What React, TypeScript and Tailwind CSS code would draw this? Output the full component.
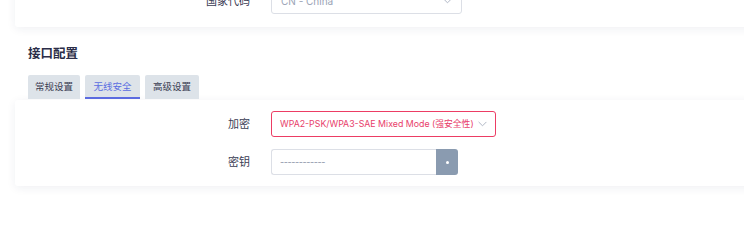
import React from "react";

const font = { fontFamily: 'Inter, "Noto Sans CJK SC", sans-serif' };

function Chevron({ className }: { className?: string }) {
  return (
    <svg viewBox="0 0 10 6" className={className} fill="none" stroke="currentColor" strokeWidth="1" strokeLinecap="round" strokeLinejoin="round">
      <path d="M1 1l4 4 4-4" />
    </svg>
  );
}

export default function App() {
  return (
    <div className="w-[744px] h-[227px] overflow-hidden bg-white" style={font}>
      <div className="pl-[15px]">
        {/* top card */}
        <div className="-mt-[16px] w-[760px] bg-white rounded-[3px] shadow-[0_2px_10px_rgba(30,40,90,0.07)] pt-[4px] pb-[13px] flex items-center">
          <div className="w-[235px] text-right text-[11px] text-[#3b3d55]">国家代码</div>
          <div className="ml-[21px] w-[191px] h-[26px] border border-[#dcdfe6] rounded-[3px] flex items-center justify-between px-[9px]">
            <span className="text-[10px] text-[#9aa3b5]">CN - China</span>
            <Chevron className="w-[9px] h-[6px] text-[#a8b0c0]" />
          </div>
        </div>

        <div className="pl-[13px] pt-[17px] text-[12.5px] font-bold text-[#2b2d48] leading-[20px]">接口配置</div>

        <div className="pl-[13px] mt-[11px] flex gap-[5px] h-[24px]">
          <div className="w-[52px] h-[24px] bg-[#dde3e9] rounded-t-[2px] flex items-center justify-center text-[9.5px] text-[#3a3c52]">常规设置</div>
          <div className="w-[55px] h-[24px] bg-[#dde3e9] rounded-t-[2px] flex items-center justify-center text-[9.5px] text-[#5b6ee1] border-b-[2px] border-[#5b6be0] pt-[2px]">无线安全</div>
          <div className="w-[54px] h-[24px] bg-[#dde3e9] rounded-t-[2px] flex items-center justify-center text-[9.5px] text-[#3a3c52]">高级设置</div>
        </div>

        {/* card 2 */}
        <div className="mt-[1px] w-[760px] bg-white rounded-[3px] shadow-[0_2px_10px_rgba(30,40,90,0.07)] pt-[11px] pb-[11px] flex flex-col gap-[12px]">
          <div className="flex items-center">
            <div className="w-[235px] text-right text-[11px] text-[#3b3d55]">加密</div>
            <div className="ml-[21px] w-[225px] h-[26px] border border-[#ec3d64] rounded-[3px] flex items-center justify-between pl-[8px] pr-[8px]">
              <span className="text-[8.8px] text-[#e8406a] whitespace-nowrap">WPA2-PSK/WPA3-SAE Mixed Mode (强安全性)</span>
              <Chevron className="w-[9px] h-[6px] text-[#a8b0c0] shrink-0" />
            </div>
          </div>
          <div className="flex items-center">
            <div className="w-[235px] text-right text-[11px] text-[#3b3d55]">密钥</div>
            <div className="ml-[21px] flex h-[26px]">
              <div className="w-[165px] h-[26px] border border-[#dcdfe6] border-r-0 rounded-l-[3px] flex items-center pl-[8px]">
                <span className="text-[9px] text-[#8a92a6] tracking-[-0.4px]">------------</span>
              </div>
              <div className="w-[22px] h-[26px] bg-[#8a9bb0] rounded-r-[3px] flex items-center justify-center">
                <span className="w-[3px] h-[3px] rounded-full bg-white" />
              </div>
            </div>
          </div>
        </div>
      </div>
    </div>
  );
}
